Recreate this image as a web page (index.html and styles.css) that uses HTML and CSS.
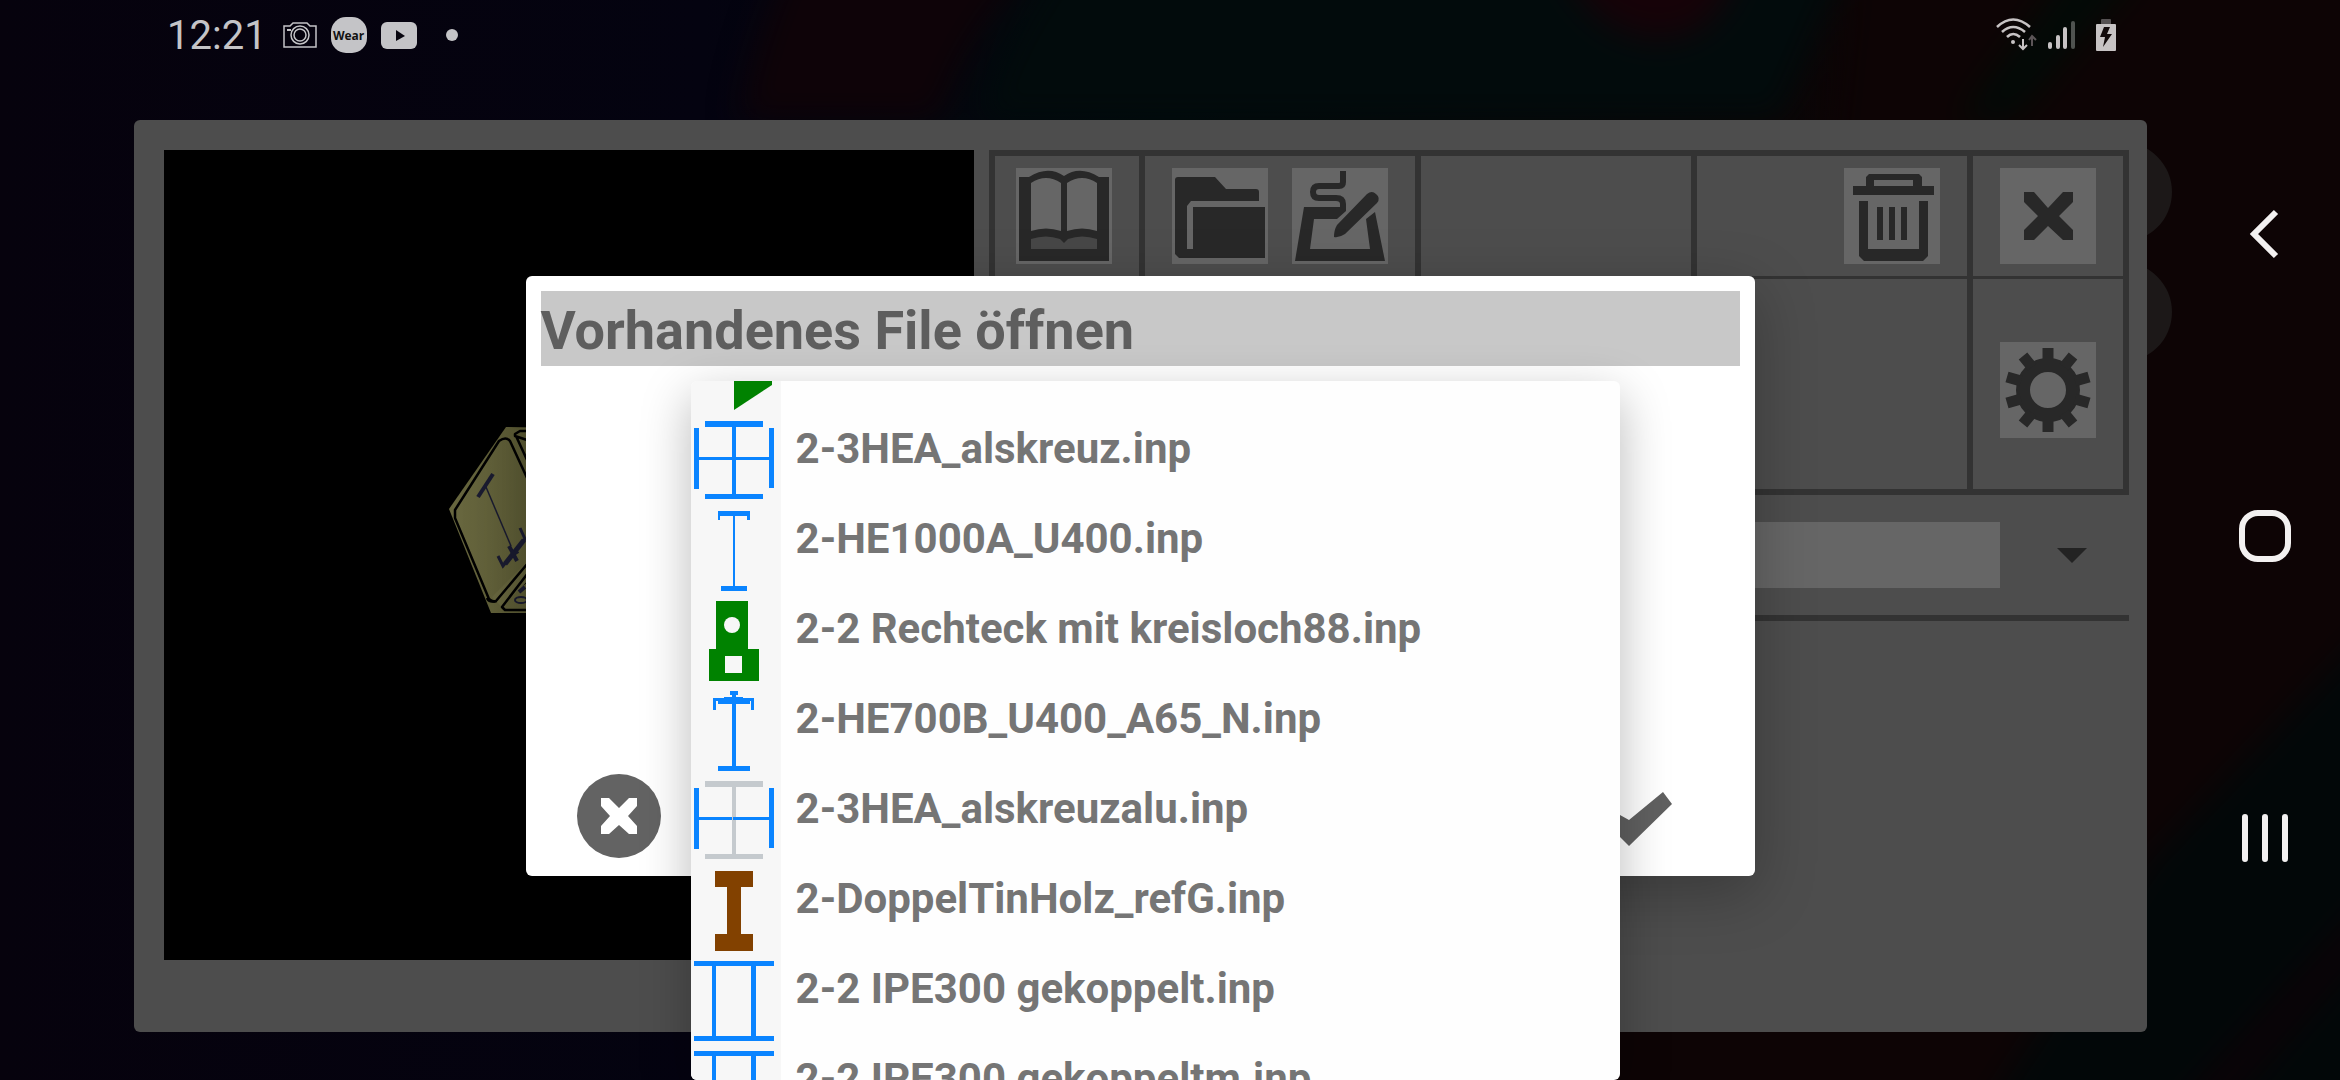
FILE: index.html
```html
<!DOCTYPE html>
<html lang="de">
<head>
	<title>Vorhandenes File öffnen</title>
	<meta charset="utf-8" />
	<meta name="viewport" content="width=device-width" />
	<link rel="stylesheet" href="styles.css">
</head>

<body>
	<svg class="wallpaper" viewBox="0 0 2340 1080" preserveAspectRatio="none" aria-hidden="true">
		<defs>
			<linearGradient id="night">
				<stop offset="0" stop-color="#06020d" />
				<stop offset="0.3" stop-color="#040310" />
				<stop offset="0.5" stop-color="#020a0c" />
				<stop offset="0.75" stop-color="#0b0506" />
				<stop offset="1" stop-color="#0e0304" />
			</linearGradient>
			<filter id="soft" color-interpolation-filters="sRGB"><feGaussianBlur stdDeviation="16" /></filter>
		</defs>
		<rect width="2340" height="1080" fill="url(#night)" />
		<g filter="url(#soft)">
			<path d="M790 -40 H1040 Q960 40 940 120 H740 Q750 50 790 -40Z" fill="#0e0308" />
			<path d="M1060 -40 H1850 L1780 120 H980 Q1000 40 1060 -40Z" fill="#020b0c" />
			<path d="M1560 -40 H1740 Q1720 44 1650 38 Q1590 30 1560 -40Z" fill="#160208" />
			<path d="M1850 -40 H2380 V700 L2140 1120 H1060 V1000 H1740Z" fill="#0d0405" />
			<path d="M2080 -40 H2150 L2010 120 H1960Z" fill="#020a06" />
			<path d="M2380 620 L2150 860 L1980 1120 H2380Z" fill="#020708" />
			<path d="M2380 890 L2170 1120 H2210 L2380 930Z" fill="#0c0206" />
		</g>
		<circle cx="2122" cy="192" r="50" fill="#1c1818" />
		<circle cx="2122" cy="312" r="50" fill="#1c1818" />
	</svg>

	<div class="screen">
		<header class="status">
			<time class="clock">12:21</time>
			<svg class="camera" width="34" height="26" viewBox="0 0 34 26" fill="none" stroke="#c4c4c7" stroke-width="1.5">
				<path d="M1 4 H7 L10 1 H24 L27 4 H33 V25 H1Z" />
				<circle cx="17" cy="13" r="9" /><circle cx="17" cy="13" r="6" />
				<path d="M4 8 H8" stroke-width="2" />
			</svg>
			<span class="wear">Wear</span>
			<svg width="36" height="27" viewBox="0 0 36 27">
				<rect width="36" height="27" rx="6" fill="#c4c4c7" />
				<path d="M15 8 L24 14 L15 19Z" fill="#08060f" />
			</svg>
			<span class="dot"></span>
			<div class="signals">
				<svg width="42" height="34" viewBox="0 0 42 34" fill="none" stroke="#c7c3c4" stroke-width="2.6">
					<path d="M1 9 Q17 -6 34 9 M6 14 Q17 4 29 14 M11 19 Q17 13 24 19" />
					<circle cx="17" cy="24" r="2" fill="#c7c3c4" stroke="none" />
					<path d="M27 21 V30 M23 27 L27 31 L31 27" stroke-width="2" />
					<path d="M36 28 V19 M33 22 L36 18 L40 22" stroke="#5c5557" stroke-width="2" />
				</svg>
				<svg width="28" height="30" viewBox="0 0 28 30" fill="#c7c3c4">
					<rect y="22" width="4" height="7" rx="2" />
					<rect x="8" y="15" width="4" height="14" rx="2" />
					<rect x="15" y="7" width="4" height="22" rx="2" />
					<rect x="23" y="1" width="4" height="28" rx="2" fill="#4f5350" />
				</svg>
				<svg width="20" height="32" viewBox="0 0 20 32">
					<path d="M5 5 V1 Q5 0 6 0 H14 Q15 0 15 1 V5Z" fill="#555152" />
					<rect y="5" width="20" height="27" rx="1" fill="#c7c3c4" />
					<path d="M8 8 H14 L11 15 H16 L7 28 L9 18 H4Z" fill="#120a0b" />
				</svg>
			</div>
		</header>

		<main class="panel">
			<div class="canvas">
				<svg viewBox="0 0 810 810" aria-hidden="true">
					<defs>
						<linearGradient id="face">
							<stop offset="0" stop-color="#68673f" />
							<stop offset="1" stop-color="#55542f" />
						</linearGradient>
					</defs>
					<path d="M285 359 L342 277 L400 278 V463 H327Z" fill="url(#face)" />
					<g fill="none" stroke="#000" stroke-width="2.5" stroke-linejoin="round">
						<path d="M291 360 L335 291 Q342 286 346 291 L400 408 L336 449 Q330 454 325 449 L291 368Z" fill="url(#face)" />
						<path d="M363 290 L351 286 V284 L356 281 H400 M352 286 L400 390" />
						<path d="M400 384 L333 452" stroke="url(#face)" stroke-width="14" />
						<path d="M364 413 L332 451 Q325 453 323 448" />
						<path d="M364 423 L338 457 L341 460 H400" />
					</g>
					<g fill="none" stroke="#1a1b30">
						<path d="M329 324 L314 347" stroke-width="4" />
						<path d="M322 337 L347 396" stroke-width="1.5" />
						<path d="M356 378 L361 389 L339 416 L334 406" stroke-width="3" />
						<path d="M360 390 L341 414" stroke-width="5" />
						<path d="M345 396 L353 411 M348 405 L354 401 M355 442 L361 437" stroke-width="4" />
						<ellipse cx="357" cy="450" rx="6" ry="3" stroke-width="2" />
					</g>
				</svg>
			</div>

			<div class="controls">
				<div class="toolbar">
					<div class="cell">
						<button class="tile" aria-label="Anleitung">
							<svg viewBox="0 0 96 96">
								<path d="M3 9 H13 Q32 -3 48 8 Q64 -3 83 9 H93 V93 H3Z" fill="#282828" />
								<path d="M15 15 Q30 5 45 15 V63 Q30 58 15 63Z M51 15 Q66 5 81 15 V63 Q66 58 51 63Z" fill="#666" />
								<path d="M15 71 Q30 66 44 71 L48 75 L52 71 Q66 66 81 71 V81 H15Z" fill="#474747" />
							</svg>
						</button>
					</div>
					<div class="cell">
						<button class="tile" aria-label="Öffnen">
							<svg viewBox="0 0 96 96" fill="#282828">
								<path d="M3 12 Q3 9 6 9 H43 L54 21 H84 Q87 21 87 24 V33 H19 L15 38 V81 H21 V39 H93 V90 H7 L3 86Z" />
							</svg>
						</button>
						<button class="tile" aria-label="Bearbeiten">
							<svg viewBox="0 0 96 96" fill="#282828">
								<path d="M51 3 V14 Q51 18 47 18 H27 Q21 18 21 24 Q21 30 27 30 H44 Q51 30 51 36 V41" fill="none" stroke="#282828" stroke-width="6" />
								<path d="M12 39 H54 V43 L45 51 H22 L18 81 H78 L74 51 L83 44 L93 93 H3Z" />
								<path d="M75 26 Q80 22 84 26 Q89 30 85 35 L53 66 Q47 70 42 69 Q42 62 45 57Z" />
							</svg>
						</button>
					</div>
					<div class="cell"></div>
					<div class="cell">
						<button class="tile" aria-label="Löschen">
							<svg viewBox="0 0 96 96" fill="#282828">
								<path d="M22 18 V9 L25 6 H75 L78 9 V18 H90 V27 H9 V18Z M30 12 V18 H69 V12Z" fill-rule="evenodd" />
								<path d="M15 33 H24 V81 H75 V33 H84 V88 L79 93 H20 L15 88Z" />
								<path d="M33 39 H39 V72 H33Z M45 39 H51 V72 H45Z M57 39 H63 V72 H57Z" />
							</svg>
						</button>
					</div>
					<div class="cell">
						<button class="tile" aria-label="Schließen">
							<svg viewBox="0 0 96 96" fill="#282828">
								<path d="M24 24 H34 L48 40 L63 24 H73 V34 L59 48 L73 62 V72 H63 L48 58 L34 72 H24 V62 L38 48 L24 34Z" />
							</svg>
						</button>
					</div>
					<div class="cell wide"></div>
					<div class="cell low">
						<button class="tile" aria-label="Einstellungen">
							<svg viewBox="0 0 96 96" fill="none" stroke="#282828">
								<circle cx="48" cy="48" r="25" stroke-width="14" />
								<path d="M48 20 V6 M64 25 L73 14 M75 39 L89 35 M75 57 L89 61 M64 71 L73 82 M48 76 V90 M32 71 L23 82 M21 57 L7 61 M21 39 L7 35 M32 25 L23 14" stroke-width="11" />
							</svg>
						</button>
					</div>
				</div>
				<div class="picker">
					<select class="profile" aria-label="Profil"><option></option></select>
					<svg class="arrow" width="30" height="15" viewBox="0 0 30 15"><path d="M0 0 H30 L15 15Z" fill="#232323" /></svg>
				</div>
			</div>

			<section class="dialog" role="dialog" aria-labelledby="dialog_title">
				<h1 id="dialog_title">Vorhandenes File öffnen</h1>
				<div class="actions">
					<button class="action" aria-label="Abbrechen">
						<svg viewBox="0 0 96 96">
							<circle cx="48" cy="48" r="42" fill="#636363" />
							<path d="M30 30 H38 L48 40 L58 30 H66 V38 L57 48 L66 58 V66 H58 L48 57 L38 66 H30 V58 L39 48 L30 38Z" fill="#fff" />
						</svg>
					</button>
					<button class="action" aria-label="OK">
						<svg viewBox="0 0 96 96"><path d="M14 51 L23 42 L41 52 L75 24 L84 36 L41 78Z" fill="#606060" /></svg>
					</button>
				</div>

				<ul class="files">
					<li><button class="file" aria-label="Dreieck">
						<svg viewBox="0 0 90 90" fill="#008200"><path d="M43 40 H81 V57 L43 82Z" /></svg>
					</button></li>
					<li><button class="file">
						<svg viewBox="0 0 90 90" fill="#0a84ff"><path d="M14 3 H72 V9 H45 V76 H72 V81 H14 V76 H41 V9 H14Z M3 10 H8 V39 H78 V10 H83 V70 H78 V42 H8 V71 H3Z" /></svg>
						<span>2-3HEA_alskreuz.inp</span>
					</button></li>
					<li><button class="file">
						<svg viewBox="0 0 90 90" fill="#0a84ff"><path d="M27 3 H59 V12 H56 V8 H44 V78 H56 V83 H30 V78 H42 V8 H29 V12 H27Z" /></svg>
						<span>2-HE1000A_U400.inp</span>
					</button></li>
					<li><button class="file">
						<svg viewBox="0 0 90 90">
							<path d="M25 3 H57 V51 H68 V83 H18 V51 H25Z" fill="#008200" />
							<circle cx="41" cy="27" r="8" fill="#f7f7f7" /><rect x="34" y="58" width="17" height="17" fill="#f7f7f7" />
						</svg>
						<span>2-2 Rechteck mit kreisloch88.inp</span>
					</button></li>
					<li><button class="file">
						<svg viewBox="0 0 90 90" fill="#0a84ff"><path d="M39 3 H47 V7 H45 V9 H52 V10 H63 V22 H60 V13 H59 V16 H45 V78 H59 V83 H27 V78 H41 V16 H27 V13 H25 V22 H22 V10 H33 V9 H41 V7 H39Z" /></svg>
						<span>2-HE700B_U400_A65_N.inp</span>
					</button></li>
					<li><button class="file">
						<svg viewBox="0 0 90 90">
							<path d="M3 10 H8 V39 H78 V10 H83 V70 H78 V42 H8 V71 H3Z" fill="#0a84ff" />
							<path d="M14 3 H72 V9 H45 V39 H42 V42 H45 V76 H72 V81 H14 V76 H41 V9 H14Z" fill="#c5cace" />
						</svg>
						<span>2-3HEA_alskreuzalu.inp</span>
					</button></li>
					<li><button class="file">
						<svg viewBox="0 0 90 90" fill="#824100"><path d="M24 3 H62 V19 H50 V66 H62 V83 H24 V66 H36 V19 H24Z" /></svg>
						<span>2-DoppelTinHolz_refG.inp</span>
					</button></li>
					<li><button class="file">
						<svg viewBox="0 0 90 90" fill="#0a84ff"><path d="M3 3 H83 V8 H65 V78 H83 V83 H3 V78 H21 V8 H3Z M25 8 V78 H60 V8Z" fill-rule="evenodd" /></svg>
						<span>2-2 IPE300 gekoppelt.inp</span>
					</button></li>
					<li><button class="file">
						<svg viewBox="0 0 90 90" fill="#0a84ff"><path d="M3 3 H83 V8 H65 V78 H83 V83 H3 V78 H21 V8 H3Z M25 8 V78 H60 V8Z" fill-rule="evenodd" /></svg>
						<span>2-2 IPE300 gekoppeltm.inp</span>
					</button></li>
				</ul>
			</section>
		</main>
	</div>

	<nav class="navbar">
		<button aria-label="Zurück">
			<svg viewBox="0 0 54 54"><path d="M38 5 L16 27 L38 49" /></svg>
		</button>
		<button aria-label="Startseite">
			<svg viewBox="0 0 54 54"><rect x="4" y="4" width="46" height="46" rx="16" /></svg>
		</button>
		<button aria-label="Letzte Apps">
			<svg viewBox="0 0 54 54"><path d="M7 6 V48 M27 6 V48 M47 6 V48" stroke-linecap="round" /></svg>
		</button>
	</nav>
</body>
</html>
```
FILE: styles.css
```css
* { box-sizing: border-box; }
body { margin: 0; min-height: 100vh; display: flex; position: relative; overflow: hidden; background: #06020d; font-family: Roboto, sans-serif; }
svg { display: block; flex: none; }
button { padding: 0; border: 0; background: none; font: inherit; color: inherit; cursor: pointer; }
.wallpaper { position: absolute; inset: 0; width: 100%; height: 100%; z-index: -1; }

.screen { flex: 1; min-width: 0; padding-left: 91px; }
.status { height: 70px; margin-bottom: 50px; padding: 0 74px 0 76px; display: flex; align-items: center; gap: 14px; color: #c4c4c7; }
.clock { font-size: 40px; line-height: 50px; margin-right: 2px; padding-top: 2px; }
.wear { width: 36px; height: 36px; border-radius: 15px; background: #c4c4c7; color: #111; font: bold 12px/38px "Open Sans", sans-serif; text-align: center; }
.dot { width: 12px; height: 12px; margin-left: 15px; border-radius: 50%; background: #c4c4c7; }
.signals { margin-left: auto; display: flex; align-items: center; gap: 10px; }
.signals svg:last-child { margin-left: 10px; }

/* main window */
.panel { position: relative; margin: 0 43px; padding: 30px 18px 72px 30px; display: grid; grid-template-columns: 81fr 114fr; gap: 15px; background: #4d4d4d; border-radius: 6px; }
.canvas { aspect-ratio: 1; background: #000; }
.toolbar { display: grid; grid-template-columns: 144fr 270fr 270fr 270fr 150fr; grid-template-rows: 120px 210px; gap: 3px 6px; padding: 6px; background: #333; }
.cell { display: flex; justify-content: flex-end; align-items: center; gap: 24px; padding-right: 27px; background: #4d4d4d; }
.wide { grid-column: span 4; }
.low { padding-top: 12px; }
.tile { width: 96px; height: 96px; background: #666; }
.picker { display: flex; align-items: center; padding: 27px 42px 27px 27px; border-bottom: 6px solid #333; }
.profile { flex: 1; height: 66px; margin-right: 57px; border: 0; border-radius: 0; background: #666; appearance: none; font-size: 42px; }

/* dialog with the opened file list over it */
.dialog { position: absolute; inset: 0; margin: auto; width: 61.1%; height: 600px; padding: 15px; display: flex; flex-direction: column; justify-content: space-between; background: #fff; border-radius: 6px; box-shadow: 0 16px 60px rgba(0,0,0,.26); }
h1 { margin: 0; height: 75px; font-size: 54px; line-height: 80px; font-weight: bold; color: #5e5e5e; background: #c8c8c8; }
.actions { display: flex; justify-content: space-between; padding: 0 56px 0 30px; margin-bottom: -3px; }
.action { width: 96px; height: 96px; }
.files { position: absolute; top: 105px; left: 165px; right: 135px; height: 699px; margin: 0; padding: 0; display: flex; flex-direction: column; justify-content: flex-end; overflow: hidden; list-style: none; background: #fefefe; border-radius: 6px; box-shadow: 0 16px 50px rgba(0,0,0,.28); }
.files li:last-child { margin-bottom: -58px; }
.file { width: 100%; height: 90px; display: flex; gap: 15px; text-align: left; font-size: 42px; line-height: 50px; font-weight: bold; color: #757575; white-space: nowrap; }
.file svg { width: 90px; height: 90px; background: #f7f7f7; }
.file span { padding-top: 6px; }

.navbar { width: 150px; padding-bottom: 8px; display: flex; flex-direction: column; align-items: center; justify-content: center; gap: 248px; }
.navbar svg { width: 54px; height: 54px; fill: none; stroke: #f3f1f1; stroke-width: 6; }
```
